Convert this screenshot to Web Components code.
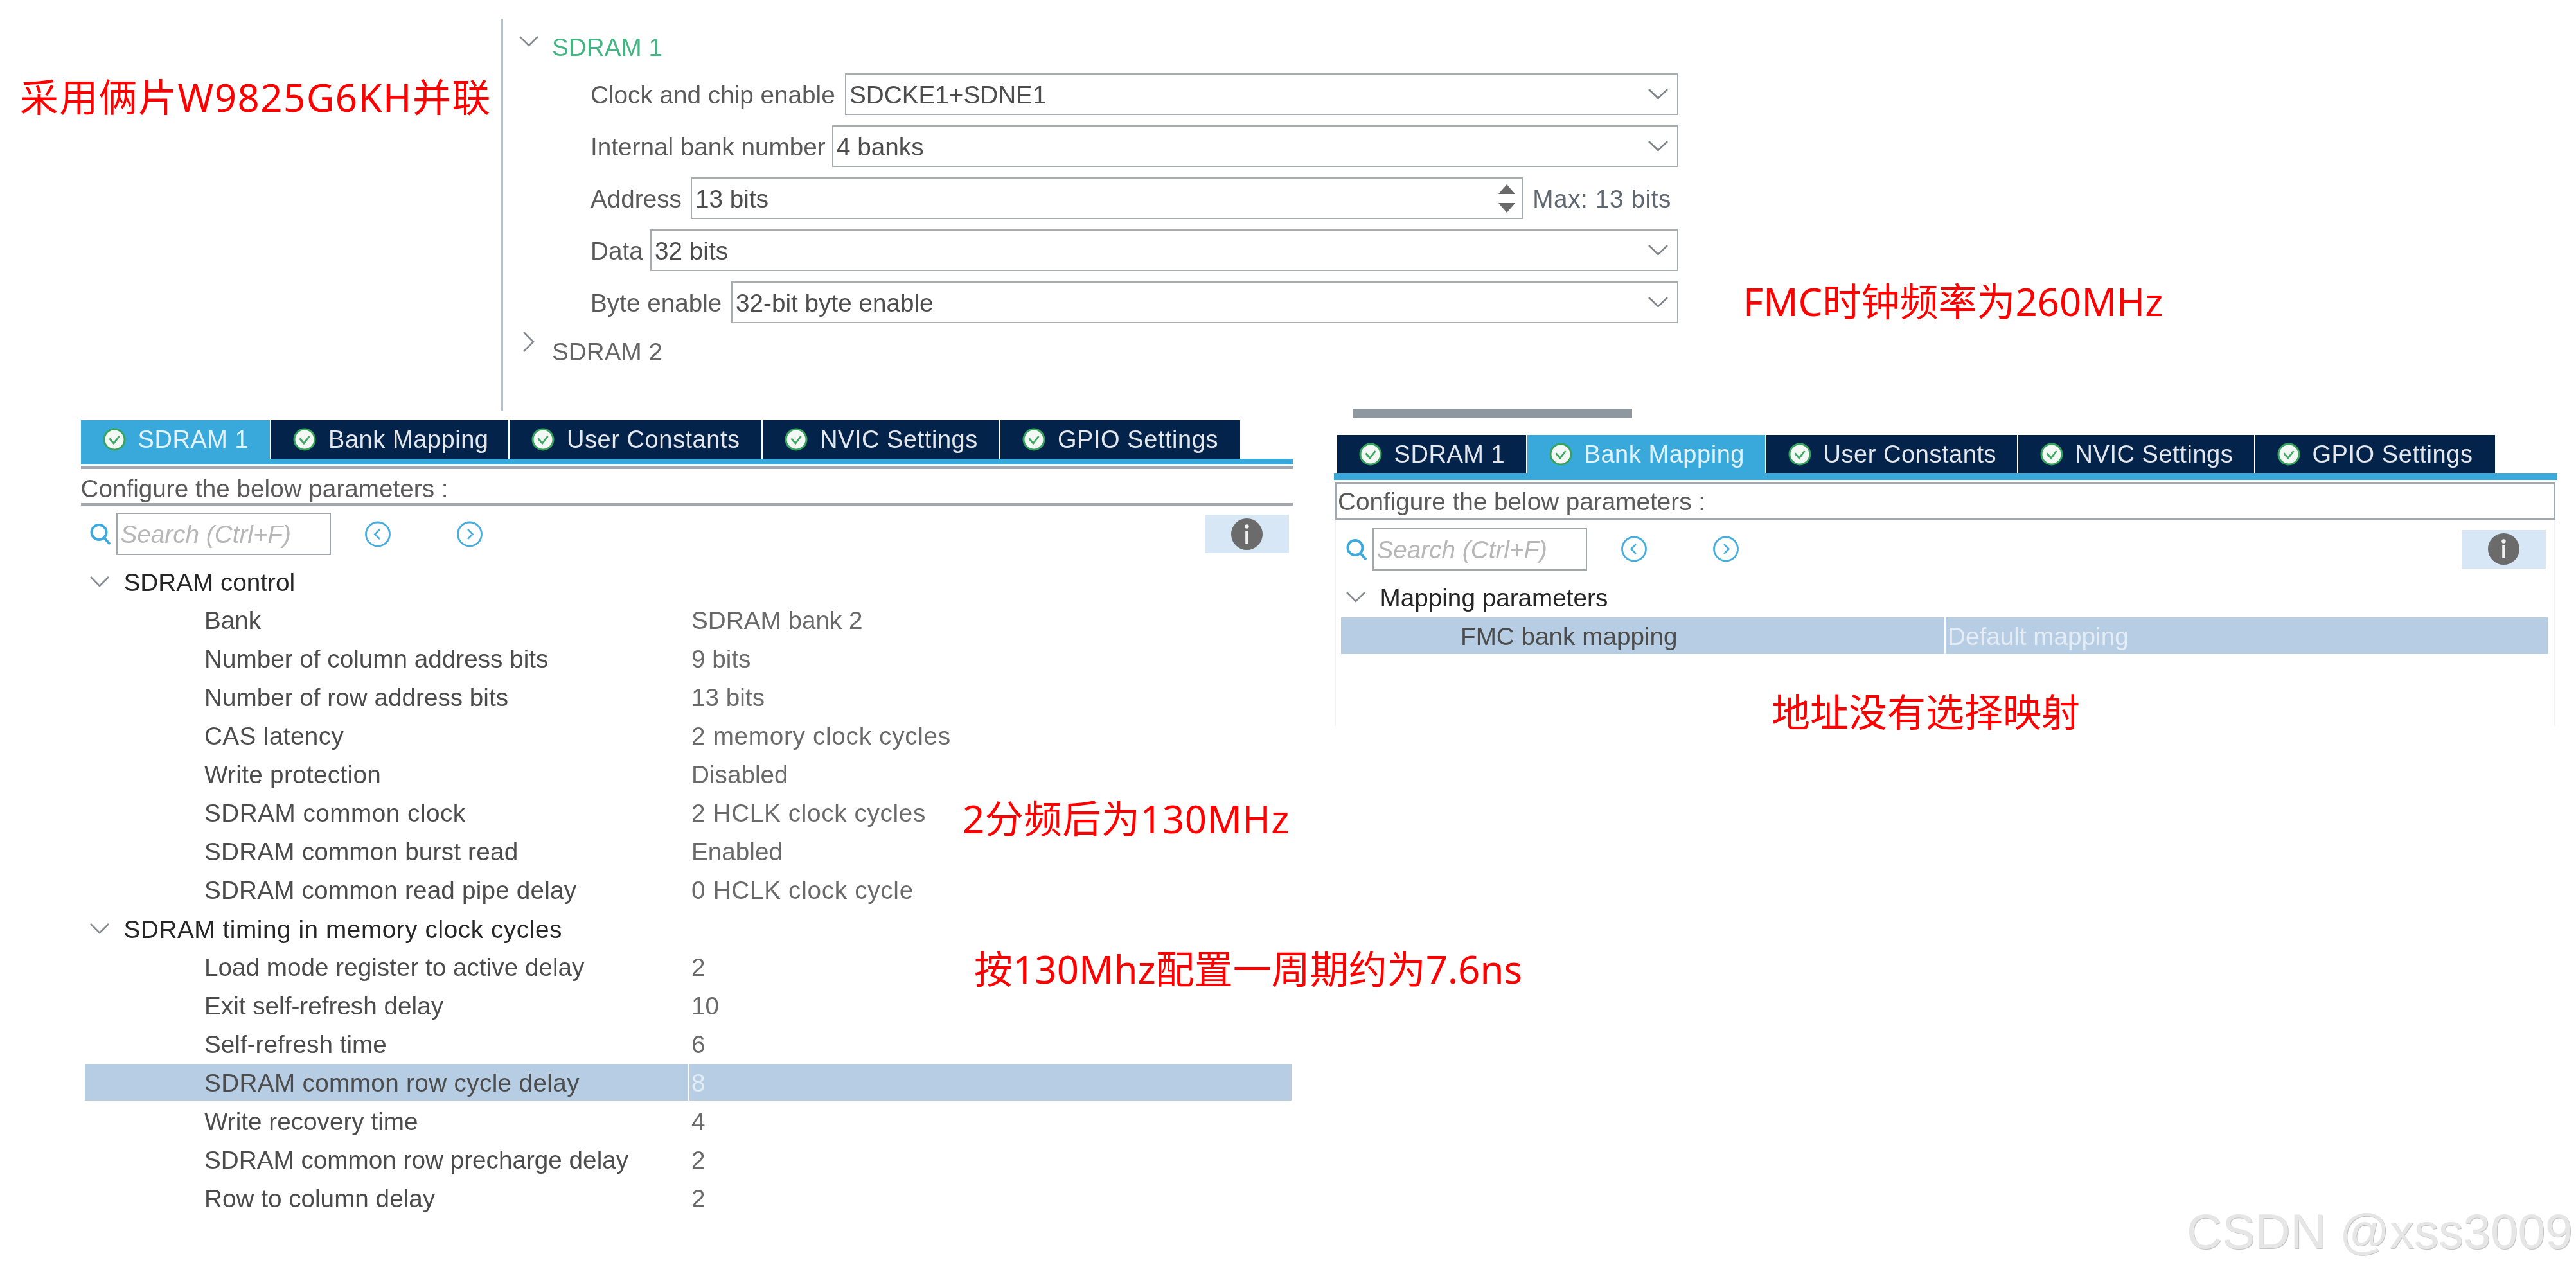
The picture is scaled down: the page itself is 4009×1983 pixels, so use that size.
<!DOCTYPE html>
<html lang="zh">
<head>
<meta charset="utf-8">
<title>SDRAM config</title>
<style>
    html, body {
        margin: 0;
        padding: 0;
        background: #fff;
    }
    body {
        position: relative;
        width: 4009px;
        height: 1983px;
        overflow: hidden;
        font-family: "Liberation Sans", Arial, sans-serif;
        font-size: 38.7px;
    }
    /* the source is an upscaled screenshot, so everything is a little soft */
    fmc-form, config-panel, red-note {
        filter: blur(.6px);
    }
    #leftPanel {
        left: 125.5px;
        top: 654px;
        width: 1886.5px;
        --strip: 9px;
        --tab-indent: 0px;
        --search-left: 14px;
        --search-right: 6px;
        --search-top: 11px;
        --tree-left: 6.5px;
        --tree-right: 2px;
        --tree-top: 10.5px;
    }
    #rightPanel {
        left: 2075.5px;
        top: 677px;
        width: 1904.5px;
        height: 453px;
        --strip: 10px;
        --tab-indent: 5px;
        --search-left: 19px;
        --search-right: 18px;
        --search-top: 13px;
        --tree-left: 11.5px;
        --tree-right: 15px;
        --tree-top: 11.5px;
    }
</style>
</head>
<body>

<red-note style="left:31px;top:106px;--spacing:1.4px">采用俩片W9825G6KH并联</red-note>
<red-note style="left:2713px;top:424px">FMC时钟频率为260MHz</red-note>
<red-note style="left:2757px;top:1063px">地址没有选择映射</red-note>
<red-note style="left:1498px;top:1229px;--spacing:.4px">2分频后为130MHz</red-note>
<red-note style="left:1516px;top:1463px">按130Mhz配置一周期约为7.6ns</red-note>

<fmc-form>
    <form-head open active>SDRAM 1</form-head>
    <form-select label="Clock and chip enable" style="--label:396px">SDCKE1+SDNE1</form-select>
    <form-select label="Internal bank number" style="--label:376px">4 banks</form-select>
    <form-spinner label="Address" style="--label:156px" max="Max: 13 bits">13 bits</form-spinner>
    <form-select label="Data" style="--label:93px">32 bits</form-select>
    <form-select label="Byte enable" style="--label:219px">32-bit byte enable</form-select>
    <form-head>SDRAM 2</form-head>
</fmc-form>

<grip-bar></grip-bar>

<config-panel id="leftPanel">
    <panel-tab slot="tabs" style="width:294.5px" active>SDRAM 1</panel-tab>
    <panel-tab slot="tabs" style="width:369px">Bank Mapping</panel-tab>
    <panel-tab slot="tabs" style="width:392px">User Constants</panel-tab>
    <panel-tab slot="tabs" style="width:368px">NVIC Settings</panel-tab>
    <panel-tab slot="tabs" style="width:373px">GPIO Settings</panel-tab>
    <tree-group>SDRAM control</tree-group>
    <tree-row value="SDRAM bank 2">Bank</tree-row>
    <tree-row value="9 bits">Number of column address bits</tree-row>
    <tree-row value="13 bits">Number of row address bits</tree-row>
    <tree-row value="2 memory clock cycles" style="--value-spacing:.7px;--label-spacing:.4px">CAS latency</tree-row>
    <tree-row value="Disabled" style="--label-spacing:.3px">Write protection</tree-row>
    <tree-row value="2 HCLK clock cycles" style="--value-spacing:.65px;--label-spacing:.5px">SDRAM common clock</tree-row>
    <tree-row value="Enabled" style="--label-spacing:.2px">SDRAM common burst read</tree-row>
    <tree-row value="0 HCLK clock cycle" style="--value-spacing:.7px;--label-spacing:.18px">SDRAM common read pipe delay</tree-row>
    <tree-group style="letter-spacing:.58px">SDRAM timing in memory clock cycles</tree-group>
    <tree-row value="2">Load mode register to active delay</tree-row>
    <tree-row value="10">Exit self-refresh delay</tree-row>
    <tree-row value="6">Self-refresh time</tree-row>
    <tree-row value="8" style="--label-spacing:.35px" selected>SDRAM common row cycle delay</tree-row>
    <tree-row value="4">Write recovery time</tree-row>
    <tree-row value="2">SDRAM common row precharge delay</tree-row>
    <tree-row value="2">Row to column delay</tree-row>
</config-panel>

<config-panel id="rightPanel" boxed>
    <panel-tab slot="tabs" style="width:294px">SDRAM 1</panel-tab>
    <panel-tab slot="tabs" style="width:370px" active>Bank Mapping</panel-tab>
    <panel-tab slot="tabs" style="width:390px">User Constants</panel-tab>
    <panel-tab slot="tabs" style="width:367px">NVIC Settings</panel-tab>
    <panel-tab slot="tabs" style="width:373px">GPIO Settings</panel-tab>
    <tree-group>Mapping parameters</tree-group>
    <tree-row value="Default mapping" selected>FMC bank mapping</tree-row>
</config-panel>

<water-mark>CSDN @xss3009</water-mark>

<script>
const FONT = '"Liberation Sans", Arial, sans-serif';

const chevronDown = `<svg width="30" height="17" viewBox="0 0 30 17" fill="none" stroke="#858b90" stroke-width="2.6"><path d="M1 1 L15 15 L29 1"/></svg>`;
const chevronRight = `<svg width="20" height="32" viewBox="0 0 20 32" fill="none" stroke="#858b90" stroke-width="2.6"><path d="M3 1 L18 16 L3 31"/></svg>`;

class RedNote extends HTMLElement {
    constructor() {
        super();
        this.attachShadow({ mode: 'open' }).innerHTML = `
            <style>
                :host {
                    display: block;
                    position: absolute;
                    white-space: nowrap;
                    color: #f00;
                    font: 60px/90px "Noto Sans", "Noto Sans CJK SC", sans-serif;
                    letter-spacing: var(--spacing, 0);
                }
            </style>
            <slot></slot>`;
    }
}
customElements.define('red-note', RedNote);

class WaterMark extends HTMLElement {
    constructor() {
        super();
        this.attachShadow({ mode: 'open' }).innerHTML = `
            <style>
                :host {
                    display: block;
                    position: absolute;
                    left: 3403px;
                    top: 1873px;
                    white-space: nowrap;
                    color: #e6e6e6;
                    font: 76.5px/88px ${FONT};
                    text-shadow: 1px 1px 0 #c4c4c4;
                }
            </style>
            <slot></slot>`;
    }
}
customElements.define('water-mark', WaterMark);

class GripBar extends HTMLElement {
    constructor() {
        super();
        this.attachShadow({ mode: 'open' }).innerHTML = `
            <style>
                :host {
                    display: block;
                    position: absolute;
                    left: 2105px;
                    top: 636px;
                    width: 435px;
                    height: 15px;
                    background: #8f979f;
                }
            </style>`;
    }
}
customElements.define('grip-bar', GripBar);

class FmcForm extends HTMLElement {
    constructor() {
        super();
        this.attachShadow({ mode: 'open' }).innerHTML = `
            <style>
                :host {
                    display: flex;
                    flex-direction: column;
                    position: absolute;
                    left: 780px;
                    top: 29px;
                    width: 1832px;
                    height: 610px;
                    box-sizing: border-box;
                    padding-top: 13px;
                    border-left: 3px solid #b9c0c7;
                    gap: 16px;
                    color: #5a5a5a;
                }
            </style>
            <slot></slot>`;
    }
}
customElements.define('fmc-form', FmcForm);

class FormHead extends HTMLElement {
    constructor() {
        super();
        const open = this.hasAttribute('open');
        this.attachShadow({ mode: 'open' }).innerHTML = `
            <style>
                :host {
                    display: flex;
                    height: 60px;
                    line-height: 63px;
                    padding-left: ${open ? 25 : 29}px;
                    margin-bottom: -4px;
                    color: #666;
                }
                :host([active]) { color: #45b483; }
                .icon { width: ${open ? 51 : 47}px; height: 60px; flex: none; }
                svg { display: block; margin-top: ${open ? 14 : 0}px; }
                :host(:not([open])) { margin-top: -3px; }
            </style>
            <div class="icon">${open ? chevronDown : chevronRight}</div>
            <slot></slot>`;
    }
}
customElements.define('form-head', FormHead);

const fieldStyle = `
    :host {
        display: flex;
        align-items: center;
        height: 65px;
        padding-left: 136px;
        white-space: nowrap;
    }
    .label { flex: none; width: var(--label); padding-top: 3px; }
    .text { padding-top: 3px; }
    .box {
        flex: 1;
        display: flex;
        align-items: center;
        justify-content: space-between;
        height: 100%;
        box-sizing: border-box;
        padding: 0 14px 0 5px;
        border: 2.5px solid #a7acb1;
        color: #4d4d4d;
    }
`;

class FormSelect extends HTMLElement {
    constructor() {
        super();
        this.attachShadow({ mode: 'open' }).innerHTML = `
            <style>${fieldStyle}</style>
            <span class="label">${this.getAttribute('label')}</span>
            <div class="box">
                <span class="text"><slot></slot></span>
                <svg width="31" height="17" viewBox="0 0 31 17" fill="none" stroke="#7c8288" stroke-width="2.6"><path d="M1 1 L15.5 15 L30 1"/></svg>
            </div>`;
    }
}
customElements.define('form-select', FormSelect);

class FormSpinner extends HTMLElement {
    constructor() {
        super();
        this.attachShadow({ mode: 'open' }).innerHTML = `
            <style>
                ${fieldStyle}
                .box { border-right-width: 2px; padding-right: 10px; }
                .max { margin: 0 11px 0 15px; padding-top: 3px; color: #5f6770; letter-spacing: .6px; }
                .arrows { display: flex; flex-direction: column; gap: 14px; }
                .arrows svg { display: block; }
            </style>
            <span class="label">${this.getAttribute('label')}</span>
            <div class="box">
                <span class="text"><slot></slot></span>
                <div class="arrows">
                    <svg width="26" height="15" viewBox="0 0 26 15" fill="#6a6a6a"><path d="M13 0 L26 15 L0 15 Z"/></svg>
                    <svg width="26" height="15" viewBox="0 0 26 15" fill="#6a6a6a"><path d="M0 0 L26 0 L13 15 Z"/></svg>
                </div>
            </div>
            <span class="max">${this.getAttribute('max')}</span>`;
    }
}
customElements.define('form-spinner', FormSpinner);

const tabTemplate = document.createElement('template');
tabTemplate.innerHTML = `
    <style>
        :host {
            display: flex;
            align-items: center;
            box-sizing: border-box;
            height: 60px;
            line-height: 60px;
            padding-left: 34px;
            gap: 19px;
            flex: none;
            font-size: 38px;
            letter-spacing: .55px;
            white-space: nowrap;
            background: #03234b;
            color: #e4e8ed;
        }
        :host([active]) {
            background: #39a9dc;
            color: #e2f2fb;
        }
        svg { display: block; flex: none; }
    </style>
    <svg width="36" height="36" viewBox="0 0 36 36">
        <circle cx="18" cy="18" r="16" fill="#f4f8f5" stroke="#35a35c" stroke-width="3"/>
        <path d="M10.5 16.5 L17 24 L25.5 13" fill="none" stroke="#3da862" stroke-width="2.8"/>
    </svg>
    <slot></slot>`;

class PanelTab extends HTMLElement {
    constructor() {
        super();
        this.attachShadow({ mode: 'open' }).appendChild(tabTemplate.content.cloneNode(true));
    }
}
customElements.define('panel-tab', PanelTab);

const panelTemplate = document.createElement('template');
panelTemplate.innerHTML = `
    <style>
        :host {
            display: block;
            position: absolute;
            box-sizing: border-box;
        }
        :host([boxed]) .body {
            border-left: 2px solid #f2f2f2;
            border-right: 2px solid #f2f2f2;
            margin: 0 3px 0 1.5px;
            flex: 1;
        }
        :host([boxed]) {
            display: flex;
            flex-direction: column;
        }
        .tabs {
            display: flex;
            gap: 2px;
            padding-left: var(--tab-indent);
        }
        .strip {
            height: var(--strip);
            background: #39a9dc;
        }
        .heading {
            box-sizing: border-box;
            height: 62px;
            margin-top: 2px;
            padding-top: 4px;
            line-height: 53px;
            border-top: 5px solid #a2a8ae;
            border-bottom: 4px solid #a2a8ae;
            color: #5a5a5a;
            white-space: nowrap;
        }
        :host([boxed]) .heading {
            height: 58.3px;
            margin: 3.7px 3px 0 2.5px;
            padding: 2px 0 0 1px;
            line-height: 50px;
            border: 3px solid #a2a8ae;
        }
        .tree {
            display: flex;
            flex-direction: column;
            margin: var(--tree-top) var(--tree-right) 0 var(--tree-left);
        }
        :host([boxed]) .tree {
            margin-left: calc(var(--tree-left) - 3.5px);
            margin-right: calc(var(--tree-right) - 5px);
        }
        :host([boxed]) search-bar {
            padding-left: calc(var(--search-left) - 3.5px);
            padding-right: calc(var(--search-right) - 5px);
        }
    </style>
    <div class="tabs"><slot name="tabs"></slot></div>
    <div class="strip"></div>
    <div class="heading">Configure the below parameters :</div>
    <div class="body">
        <search-bar></search-bar>
        <div class="tree"><slot></slot></div>
    </div>`;

class ConfigPanel extends HTMLElement {
    constructor() {
        super();
        this.attachShadow({ mode: 'open' }).appendChild(panelTemplate.content.cloneNode(true));
    }
}
customElements.define('config-panel', ConfigPanel);

const navIcon = d => `<svg width="40" height="41" viewBox="0 0 40 41" fill="none" stroke="#46aede"><circle cx="20" cy="20.5" r="18.5" stroke-width="2.8"/><path d="${d}" stroke-width="2.6"/></svg>`;

class SearchBar extends HTMLElement {
    constructor() {
        super();
        this.attachShadow({ mode: 'open' }).innerHTML = `
            <style>
                :host {
                    display: flex;
                    align-items: center;
                    height: 66px;
                    margin-top: var(--search-top);
                    padding-left: var(--search-left);
                    padding-right: var(--search-right);
                }
                svg { display: block; flex: none; }
                .input {
                    box-sizing: border-box;
                    width: 334px;
                    height: 66px;
                    margin-left: 8px;
                    padding-left: 5px;
                    line-height: 63px;
                    border: 2.5px solid #a2a7ab;
                    color: #b7b7b7;
                    font-style: italic;
                    white-space: nowrap;
                }
                .prev { margin-left: 53px; }
                .next { margin-left: 103.5px; }
                .info {
                    display: flex;
                    align-items: center;
                    justify-content: center;
                    width: 131px;
                    height: 60px;
                    margin-left: auto;
                    background: #d8e7f5;
                }
            </style>
            <svg width="33" height="34" viewBox="0 0 33 34" fill="none" stroke="#3ea9dc" stroke-width="4"><circle cx="14" cy="14.5" r="11.5"/><path d="M22 23 L31 33"/></svg>
            <div class="input">Search (Ctrl+F)</div>
            <span class="prev">${navIcon('M23 13 L15.5 20.5 L23 28')}</span>
            <span class="next">${navIcon('M17 13 L24.5 20.5 L17 28')}</span>
            <div class="info">
                <svg width="49" height="49" viewBox="0 0 49 49">
                    <circle cx="24.5" cy="24.5" r="24.5" fill="#6b6b6b"/>
                    <circle cx="24.5" cy="12.5" r="3.2" fill="#f2f2f2"/>
                    <rect x="22.2" y="19" width="4.6" height="20" fill="#f2f2f2"/>
                </svg>
            </div>`;
    }
}
customElements.define('search-bar', SearchBar);

class TreeGroup extends HTMLElement {
    constructor() {
        super();
        this.attachShadow({ mode: 'open' }).innerHTML = `
            <style>
                :host {
                    display: flex;
                    align-items: flex-start;
                    height: 60px;
                    line-height: 63px;
                    padding-left: 7.5px;
                    gap: 23px;
                    color: #262626;
                    white-space: nowrap;
                }
                svg { display: block; flex: none; margin-top: 22px; }
            </style>
            ${chevronDown}
            <span><slot></slot></span>`;
    }
}
customElements.define('tree-group', TreeGroup);

class TreeRow extends HTMLElement {
    constructor() {
        super();
        this.attachShadow({ mode: 'open' }).innerHTML = `
            <style>
                :host {
                    display: grid;
                    grid-template-columns: 939px 1fr;
                    gap: 2px;
                    height: 60px;
                    line-height: 60px;
                    white-space: nowrap;
                }
                div {
                    box-sizing: border-box;
                    height: 57px;
                    margin-top: 1.5px;
                }
                .label { padding-left: 186px; color: #4c4c4c; letter-spacing: var(--label-spacing, 0); }
                .value { padding-left: 3px; color: #6a6a6a; letter-spacing: var(--value-spacing, 0); }
                :host([selected]) div { background: #b7cde4; }
                :host([selected]) .value { color: #e4edf6; }
            </style>
            <div class="label"><slot></slot></div>
            <div class="value">${this.getAttribute('value')}</div>`;
    }
}
customElements.define('tree-row', TreeRow);
</script>
</body>
</html>
